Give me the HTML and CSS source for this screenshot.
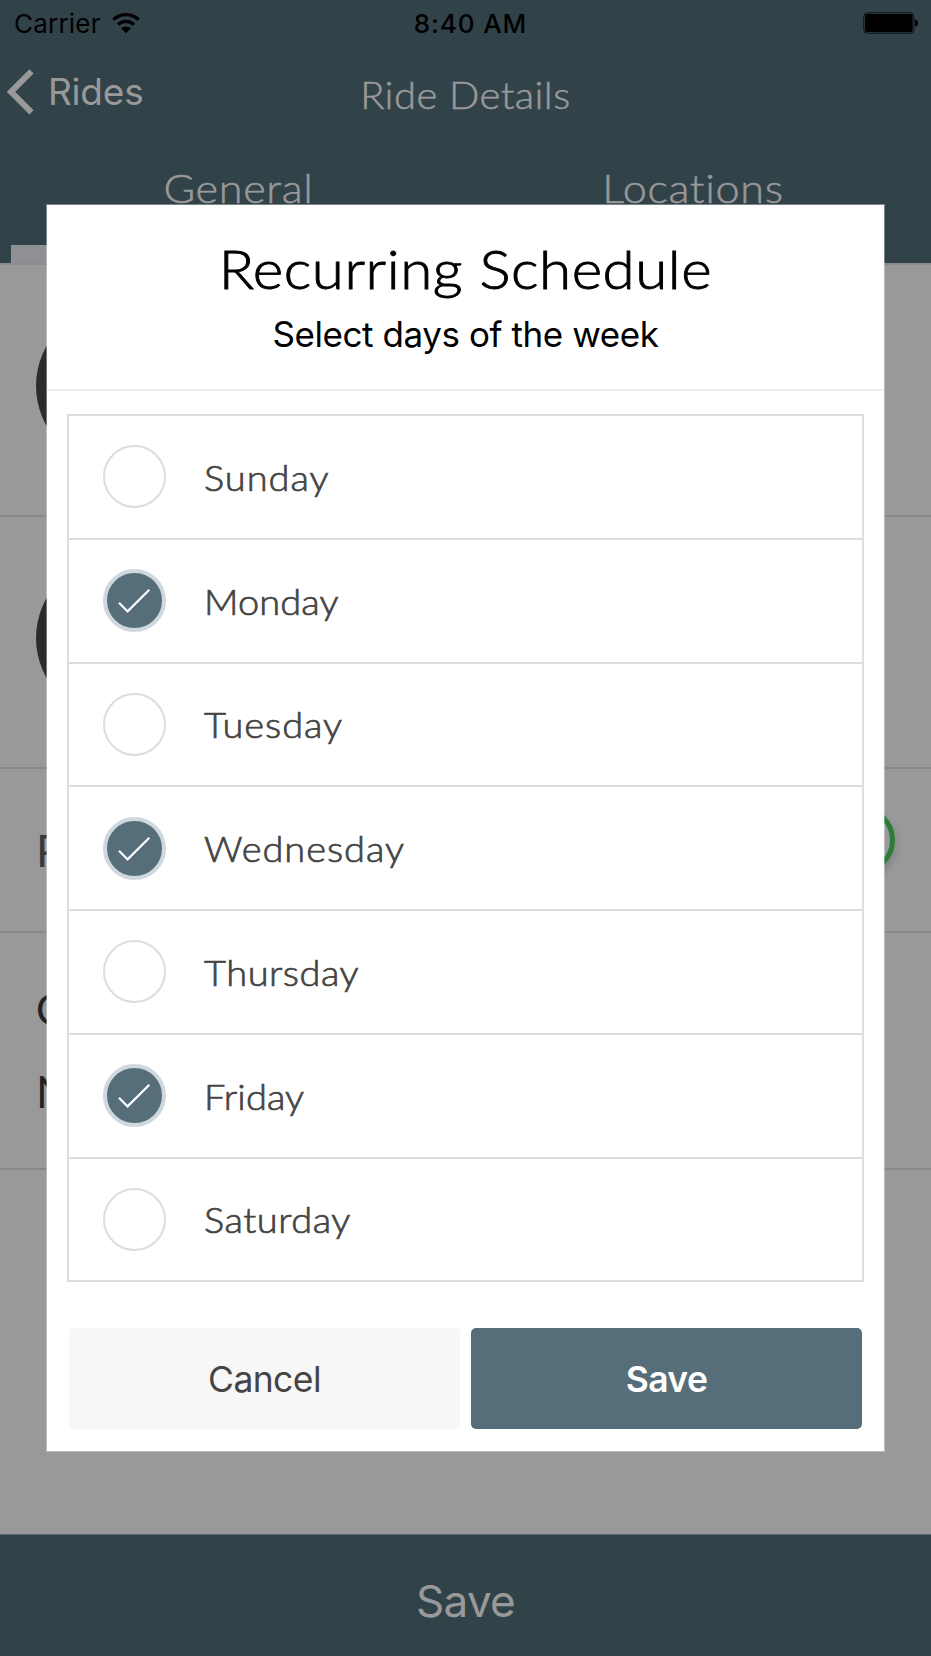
FILE: index.html
```html
<!DOCTYPE html>
<html lang="en">
<head>
<meta charset="utf-8">
<title>Ride Details</title>
<link rel="stylesheet" href="styles.css">
</head>
<body>
<div class="screen">
  <header class="top">
    <div class="status">
      <div class="carrier"><span>Carrier</span>
        <svg class="wifi" viewBox="0 0 28 21" width="28" height="21"><path d="M1.3 6.7a18.3 18.3 0 0 1 25.4 0M6 11.6a11.6 11.6 0 0 1 16 0" fill="none" stroke="#000" stroke-width="3.2"/><path d="M9 15.3a7.5 7.5 0 0 1 10 0l-5 5z"/></svg>
      </div>
      <div class="time">8:40 AM</div>
      <svg class="battery" viewBox="0 0 56 22" width="56" height="22"><rect x=".8" y=".8" width="50" height="20.4" rx="3.5" fill="none" stroke="#0b1114" stroke-width="1"/><rect x="2" y="2" width="47.6" height="18" rx="2"/><path d="M52 7.4c4 .6 4 6.6 0 7.2z"/></svg>
    </div>
    <div class="navbar">
      <div class="back">
        <svg viewBox="0 0 28 46" width="28" height="46"><path d="M24.5 2.3 4 22.8l20.5 20.5" fill="none" stroke="#999" stroke-width="6"/></svg>
        <span>Rides</span>
      </div>
      <div class="nav-title"><span>Ride Details</span></div>
    </div>
    <div class="tabs">
      <div class="tab active"><span>General</span></div>
      <div class="tab"><span>Locations</span></div>
    </div>
  </header>
  <main class="details">
    <section class="person"><div class="avatar"></div></section>
    <section class="person"><div class="avatar"></div></section>
    <section class="toggle-row"><span>P</span><div class="knob"></div></section>
    <section class="notes"><p class="c">C</p><p>N</p></section>
  </main>
  <footer class="footer"><span>Save</span></footer>

  <div class="modal">
    <div class="modal-head">
      <h1><span>Recurring Schedule</span></h1>
      <p><span>Select days of the week</span></p>
    </div>
    <ul class="days">
      <li><i class="radio"></i><span class="wide">Sunday</span></li>
      <li><i class="radio on"><svg viewBox="0 0 63 63"><path d="M16 33.7 24.6 42.4 46.3 20.8"/></svg></i><span class="tight">Monday</span></li>
      <li><i class="radio"></i><span class="wide">Tuesday</span></li>
      <li><i class="radio on"><svg viewBox="0 0 63 63"><path d="M16 33.7 24.6 42.4 46.3 20.8"/></svg></i><span class="wide">Wednesday</span></li>
      <li><i class="radio"></i><span>Thursday</span></li>
      <li><i class="radio on"><svg viewBox="0 0 63 63"><path d="M16 33.7 24.6 42.4 46.3 20.8"/></svg></i><span class="tight">Friday</span></li>
      <li><i class="radio"></i><span>Saturday</span></li>
    </ul>
    <div class="actions">
      <button class="btn cancel"><span>Cancel</span></button>
      <button class="btn save"><span>Save</span></button>
    </div>
  </div>
</div>
</body>
</html>
```
FILE: styles.css
```css
* { box-sizing: border-box; }
body { margin: 0; }
h1, p, ul { margin: 0; padding: 0; font-weight: 400; }
span { white-space: nowrap; }

.screen {
  position: relative;
  width: 931px;
  height: 1656px;
  overflow: hidden;
  display: flex;
  flex-direction: column;
  background: #999;
  font-family: Inter, "Liberation Sans", sans-serif;
}

.top { height: 263px; flex: none; background: #324249; color: #999; }
.status {
  display: grid;
  grid-template-columns: 1fr auto 1fr;
  align-items: center;
  height: 46px;
  padding: 0 12px 0 14px;
  color: #000;
  font-size: 26px;
}
.carrier { display: flex; align-items: center; gap: 11px; letter-spacing: .2px; }
.wifi { display: block; }
.time { font-weight: 500; letter-spacing: .9px; padding-left: 8px; }
.battery { justify-self: end; }

.navbar {
  display: grid;
  grid-template-columns: 1fr auto 1fr;
  height: 94px;
}
.back { display: flex; align-items: center; gap: 13px; padding-left: 7px; height: 91px; font-size: 37px; letter-spacing: -.2px; }
.nav-title {
  height: 96px;
  font: 300 37px/97px Lato, sans-serif;
  letter-spacing: .4px;
  -webkit-text-stroke: .5px #999;
}

/* Slightly extended letterforms for headings and tab labels */
.nav-title span,
.tab span,
.modal-head h1 span { display: inline-block; transform: scaleX(1.08); }

.tabs { display: flex; height: 123px; padding: 0 11px; }
.tab { flex: 1; text-align: center; font: 300 40px/96px Lato, sans-serif; letter-spacing: .6px; -webkit-text-stroke: .5px #999; }
.tab.active { border-bottom: 18px solid #8e9093; }

.details { flex: 1; border-top: 2px solid #8b8b8b; }
.person { height: 252px; border-bottom: 2px solid #888; padding: 40px 36px; }
.avatar { width: 162px; height: 162px; border-radius: 50%; background: #2c2c2c; }
.toggle-row {
  display: flex;
  justify-content: space-between;
  align-items: center;
  height: 164px;
  border-bottom: 2px solid #888;
  padding: 0 36px;
  font: 400 44px/1 Lato, sans-serif;
  color: #3a3a3a;
}
.knob {
  width: 68px;
  height: 68px;
  margin-bottom: 20px;
  border: 5px solid #2a7d37;
  border-radius: 50%;
  box-shadow: 0 5px 8px rgba(0, 0, 0, .2);
}
.notes { height: 237px; border-bottom: 2px solid #888; padding: 35px 36px; font: 400 44px/82px Lato, sans-serif; color: #222; }
.notes .c { font-size: 42px; }

.footer {
  height: 122px;
  flex: none;
  border-top: 1px solid #5f6a6e;
  background: #324249;
  color: #999;
  text-align: center;
  font-size: 44px;
  letter-spacing: -.7px;
  line-height: 133px;
}

.modal {
  position: absolute;
  left: 47px;
  top: 205px;
  width: 837px;
  height: 1246px;
  background: #fff;
  box-shadow: 0 0 0 1px rgba(255, 255, 255, .35);
}
.modal-head { height: 186px; border-bottom: 2px solid #eee; padding-top: 29px; text-align: center; color: #000; }
.modal-head h1 { font: 300 54px/70px Lato, sans-serif; letter-spacing: .5px; -webkit-text-stroke: .9px #000; }
.modal-head p { font-size: 35px; line-height: 60px; letter-spacing: -.43px; }

.days {
  margin: 23px 20px 0;
  border: 2px solid #ddd;
  border-bottom: 0;
  list-style: none;
}
.days li {
  display: flex;
  align-items: center;
  gap: 38px;
  height: 123.75px;
  padding-left: 34px;
  border-bottom: 2px solid #ddd;
  font: 300 35.5px/60px Lato, sans-serif;
  letter-spacing: .5px;
  color: #444;
  -webkit-text-stroke: .7px #444;
}
.days span { padding-top: 2px; transform: scaleX(1.07); transform-origin: left; }
.days .wide { letter-spacing: .9px; }
.days .tight { letter-spacing: .1px; }
.radio { width: 63px; height: 63px; border: 2px solid #ddd; border-radius: 50%; }
.radio.on { border: 4px solid #cfd8dc; background: #566e7a; }
.radio svg { display: block; width: 63px; height: 63px; margin: -4px; }
.radio path { fill: none; stroke: #fff; stroke-width: 2.2; }

.actions { display: flex; gap: 11px; padding: 45.5px 22px 0; }
.btn { flex: 1; height: 101px; border: 0; border-radius: 5px; font: 400 35.5px/1 Inter, sans-serif; letter-spacing: -.6px; padding: 2px 0 0; }
.cancel { background: #f7f7f7; color: #444; }
.save { background: #566e7a; color: #fff; font-weight: 600; }
```
